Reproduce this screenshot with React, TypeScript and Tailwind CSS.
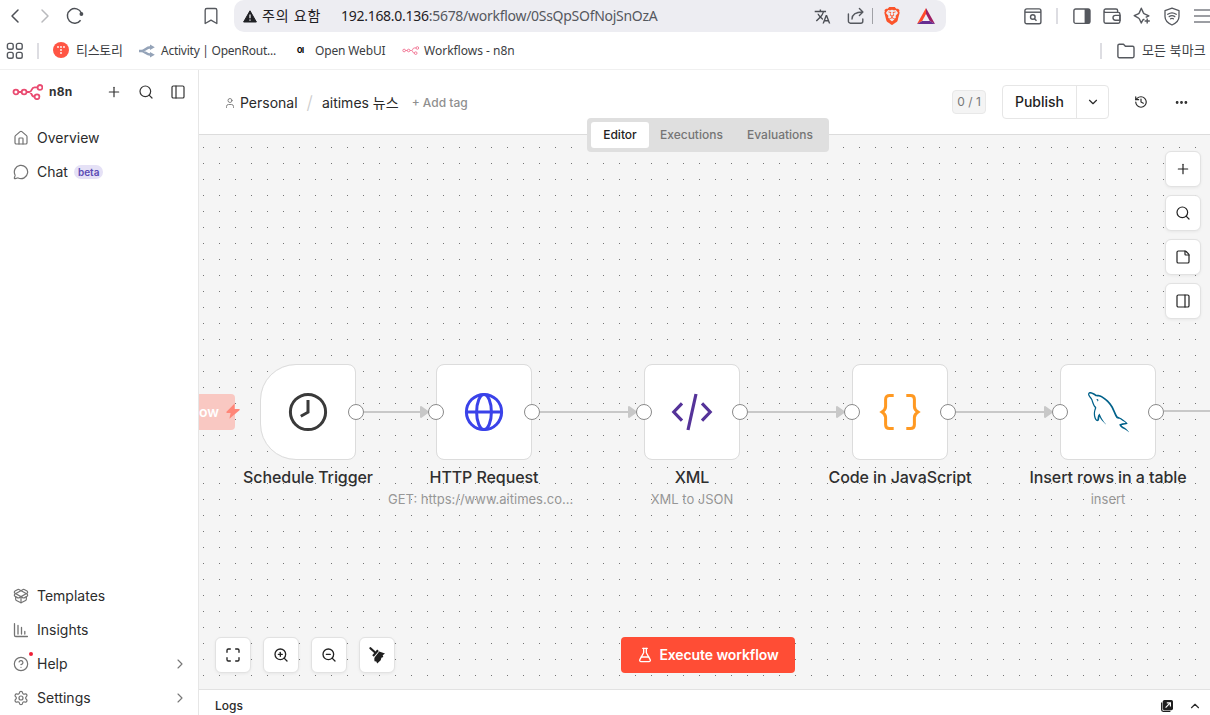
import React from 'react';
import {
  Bookmark,
  ChevronDown,
  ChevronLeft,
  ChevronRight,
  ChevronUp,
  CircleHelp,
  Ellipsis,
  FlaskConical,
  History,
  House,
  Maximize,
  MessageCircle,
  PackageOpen,
  PanelLeft,
  PanelRight,
  Plus,
  Search,
  Settings,
  StickyNote,
  User,
  ZoomIn,
  ZoomOut,
} from 'lucide-react';
import { GrMysql } from 'react-icons/gr';
import { MdTranslate } from 'react-icons/md';
import { SiBrave } from 'react-icons/si';

const N8nLogo = ({ className }: { className?: string }) => (
  <svg viewBox="0 0 31 16" className={className} fill="none" stroke="currentColor" strokeWidth="1.8">
    <circle cx="3.9" cy="8" r="2.4" />
    <circle cx="12.1" cy="8" r="2.4" />
    <circle cx="28" cy="3.4" r="2.4" />
    <circle cx="25" cy="12.8" r="2.4" />
    <path d="M6.300 8H9.700M14.500 8h2.800c3 0 1.600-4.600 5.200-4.600h3.100M17.300 8c3 0 1.400 4.800 5.300 4.800" />
  </svg>
);

const ReloadIcon = () => (
  <svg viewBox="0 0 18 18" className="size-[18px]" fill="none" stroke="#4d5056" strokeWidth="1.5">
    <path d="M14.6 13.2A7.3 7.3 0 1 1 15.4 6" />
    <circle cx="15.4" cy="7" r="1.9" fill="#4d5056" stroke="none" />
  </svg>
);

const AppsIcon = () => (
  <svg viewBox="0 0 18 18" className="size-[18px]" fill="none" stroke="#55585e" strokeWidth="1.4">
    <rect x="1.4" y="1.4" width="5.8" height="5.8" rx="1.8" />
    <rect x="10.4" y="1.4" width="5.8" height="5.8" rx="1.8" />
    <rect x="1.4" y="10.4" width="5.8" height="5.8" rx="1.8" />
    <rect x="10.4" y="10.4" width="5.8" height="5.8" rx="1.8" />
  </svg>
);

const WarningIcon = () => (
  <svg viewBox="0 0 14 13" className="w-[14px] h-[13px]">
    <path d="M7 .8 13.4 12H.6Z" fill="#1f2024" stroke="#1f2024" strokeLinejoin="round" />
    <path d="M7 4.6v3.6M7 9.4v1.3" stroke="#ededf2" strokeWidth="1.3" />
  </svg>
);

const ShareIcon = () => (
  <svg viewBox="0 0 18 18" className="size-[18px]" fill="none" stroke="#55585e" strokeWidth="1.4" strokeLinecap="round" strokeLinejoin="round">
    <path d="M1.4 7v7.2a2 2 0 0 0 2 2h10.4a2 2 0 0 0 2-2V12" />
    <path d="M5 12c.2-4.2 3-7 10.6-7M12.4 1.6 15.9 5l-3.5 3.4" />
  </svg>
);

const BatIcon = () => (
  <svg viewBox="0 0 18 16" className="w-[18px] h-4">
    <path d="M9 0 0 16l5.2-3L9 6Z" fill="#ff4a2a" />
    <path d="m9 0 9 16-5.2-3L9 6Z" fill="#9e1f63" />
    <path d="M0 16h18l-5.2-3H5.2Z" fill="#662d91" />
  </svg>
);

const FindIcon = () => (
  <svg viewBox="0 0 18 17" className="w-[18px] h-[17px]" fill="none" stroke="#55585e" strokeWidth="1.4">
    <rect x=".9" y=".9" width="16" height="14.8" rx="1.8" />
    <path d="M1 4.2h16" />
    <circle cx="8.8" cy="9" r="2.3" />
    <path d="m10.5 10.7 2 2" />
  </svg>
);

const BrowserSidebarIcon = () => (
  <svg viewBox="0 0 18 17" className="w-[18px] h-[17px]">
    <rect x=".9" y="1" width="16" height="14.4" rx="1.8" fill="none" stroke="#55585e" strokeWidth="1.4" />
    <path d="M11.6 1h4a1.6 1.6 0 0 1 1.6 1.6v11.2a1.6 1.6 0 0 1-1.6 1.6h-4Z" fill="#55585e" />
  </svg>
);

const WalletIcon = () => (
  <svg viewBox="0 0 18 17" className="w-[18px] h-[17px]" fill="none" stroke="#55585e" strokeWidth="1.4">
    <path d="M14.6 4.2V2.6a1.6 1.6 0 0 0-1.6-1.6H2.6A1.7 1.7 0 0 0 1 2.7c0 1 .8 1.7 1.7 1.7h12.6c.9 0 1.6.7 1.6 1.6v7.6c0 .9-.7 1.6-1.6 1.6H2.6A1.6 1.6 0 0 1 1 13.6V2.7" />
    <path d="M17 7.4h-4.6a2.4 2.4 0 0 0 0 4.8H17Z" />
  </svg>
);

const LeoIcon = () => (
  <svg viewBox="0 0 18 18" className="size-[18px]" fill="none" stroke="#55585e" strokeWidth="1.4" strokeLinejoin="round">
    <path d="M11.4 12.2 9.8 13 8.3 16 6.4 12c-.3-.6-.6-.9-1.2-1.2L1.2 8.7l4-1.9c.6-.3.9-.6 1.2-1.2l1.9-4.4 2 4.4c.3.6.6.9 1.2 1.2l4.4 2-3.2 1.5" />
    <path d="M14.2 11.4v5.2M11.6 14h5.2" />
  </svg>
);

const ShieldIcon = () => (
  <svg viewBox="0 0 18 19" className="w-[18px] h-[19px]" fill="none" stroke="#55585e" strokeWidth="1.3" strokeLinejoin="round" strokeLinecap="round">
    <path d="M9 1.2 16 3.6v6c0 4-3 6.7-7 8.4-4-1.7-7-4.4-7-8.4v-6Z" />
    <path d="M4.8 7.3c2.6-1.8 5.8-1.8 8.4 0M6.2 9.6c1.7-1.2 3.9-1.2 5.6 0" />
    <path d="M7.6 11.8c.9-.6 1.9-.6 2.8 0" />
  </svg>
);

const MenuIcon = () => (
  <svg viewBox="0 0 18 16" className="w-[18px] h-4" stroke="#7c7f85" strokeWidth="1.5">
    <path d="M1 2h17M1 8h17M1 14h17" />
  </svg>
);

const TistoryIcon = () => (
  <svg viewBox="0 0 16 16" className="size-4">
    <circle cx="8" cy="8" r="8" fill="#ff5544" />
    <g fill="#fff">
      <circle cx="5" cy="5" r=".9" />
      <circle cx="8" cy="5" r=".9" />
      <circle cx="11" cy="5" r=".9" />
      <circle cx="8" cy="8" r=".9" />
      <circle cx="8" cy="11" r=".9" />
    </g>
  </svg>
);

const OpenRouterIcon = () => (
  <svg viewBox="0 0 16 14" className="w-4 h-[14px]" fill="none" stroke="#94a3b8" strokeWidth="2.4">
    <path d="M0 7h2.5C6 7 6.5 3.3 12 3.3M2.5 7C6 7 6.5 10.7 12 10.7" />
    <path d="M11 .6 15.8 3.3 11 6ZM11 8l4.8 2.7L11 13.4Z" fill="#94a3b8" stroke="none" />
  </svg>
);

const FolderIcon = () => (
  <svg viewBox="0 0 18 16" className="w-[18px] h-4" fill="none" stroke="#55585e" strokeWidth="1.4" strokeLinejoin="round">
    <path d="M.9 2.6c0-.8.6-1.4 1.4-1.4h4.2l1.9 2.1h7.2c.8 0 1.4.6 1.4 1.4v8.6c0 .8-.6 1.4-1.4 1.4H2.3c-.8 0-1.4-.6-1.4-1.4Z" />
  </svg>
);

const InsightsIcon = () => (
  <svg viewBox="0 0 16 16" className="size-4" fill="none" stroke="currentColor" strokeWidth="1.3" strokeLinecap="round">
    <path d="M1.5 1.7v11.5c0 .8.5 1.3 1.3 1.3h11.6M5 3.5v8.5M8.5 5.5v6.5M11.8 9.5v2.5" />
  </svg>
);

const BroomIcon = () => (
  <svg viewBox="0 0 18 18" className="size-[18px]">
    <path d="M2.4 2.2 6.6 6" stroke="#1f1f1f" strokeWidth="2.2" strokeLinecap="round" />
    <path d="m4.2 9.2 5-5.6 1.6 1.4-4.9 5.7Z" fill="#1f1f1f" />
    <path d="m11.2 5.6 5.800 2-2.300 1.600.6 1.800-1.900.8-.7 2.400-3.500 3.200-.9-1.800-1.800-.4-.2-2.400.3-1.400Z" fill="#1f1f1f" />
  </svg>
);

const PopOutIcon = () => (
  <svg viewBox="0 0 14 14" className="size-[14px]" fill="none">
    <path d="M1.7 3.6v7.2c0 .9.6 1.5 1.5 1.5h7.2" stroke="#1f1f1f" strokeWidth="1.3" />
    <rect x="2.8" y="1" width="10.2" height="10.2" rx="1.6" fill="#1f1f1f" />
    <path d="M5.6 8.6 10 4.2M6.8 3.8h3.6v3.6" stroke="#fff" strokeWidth="1.2" />
  </svg>
);

const ClockIcon = () => (
  <svg viewBox="0 0 40 40" className="size-10" fill="none" stroke="#3a3a3a" strokeWidth="3">
    <circle cx="20" cy="20" r="17.6" />
    <path d="M20 8v12.2l-7.2 4" />
  </svg>
);

const GlobeIcon = () => (
  <svg viewBox="0 0 40 40" className="size-10" fill="none" stroke="#3a42e9" strokeWidth="3">
    <circle cx="20" cy="20" r="17.6" />
    <ellipse cx="20" cy="20" rx="7.4" ry="17.6" />
    <path d="M2 20h36" />
  </svg>
);

const XmlIcon = () => (
  <svg viewBox="0 0 44 40" className="w-11 h-10" fill="none" stroke="#553399" strokeWidth="3.2">
    <path d="M12 11.4 3.8 20l8.2 8.6M32 11.4l8.2 8.6-8.2 8.6M26 2l-8 36" />
  </svg>
);

const BracesIcon = () => (
  <svg viewBox="0 0 44 40" className="w-11 h-10" fill="none" stroke="#ff9922" strokeWidth="3">
    <path d="M15.7 3.5h-4.2c-2.2 0-3.900 1.300-3.900 3.700v7.300c0 2.300-.9 3.700-3.600 5.500 2.700 1.800 3.600 3.200 3.600 5.500v7.300c0 2.400 1.700 3.700 3.900 3.700h4.200M28.300 3.500h4.200c2.200 0 3.900 1.300 3.900 3.700v7.300c0 2.300.9 3.700 3.600 5.500-2.700 1.800-3.600 3.200-3.600 5.500v7.300c0 2.400-1.700 3.700-3.900 3.700h-4.200" />
  </svg>
);

interface WorkflowNode {
  name: string;
  subtitle?: string;
  x: number;
  trigger?: boolean;
  icon: React.ReactNode;
}

const NODE_TOP = 229;

const nodes: WorkflowNode[] = [
  { name: 'Schedule Trigger', x: 61, trigger: true, icon: <ClockIcon /> },
  { name: 'HTTP Request', subtitle: 'GET: https://www.aitimes.co...', x: 237, icon: <GlobeIcon /> },
  { name: 'XML', subtitle: 'XML to JSON', x: 445, icon: <XmlIcon /> },
  { name: 'Code in JavaScript', x: 653, icon: <BracesIcon /> },
  { name: 'Insert rows in a table', subtitle: 'insert', x: 861, icon: <GrMysql size={41} color="#00618a" /> },
];

const Handle = ({ side }: { side: 'left' | 'right' }) => (
  <span
    className={`absolute top-10 size-4 rounded-full border border-[#8a8a8a] bg-white ${
      side === 'left' ? '-left-2' : '-right-2'
    }`}
  />
);

const CanvasNode = ({ node }: { node: WorkflowNode }) => (
  <div className="absolute w-24" style={{ left: node.x, top: NODE_TOP }}>
    <div
      className={`relative flex size-24 items-center justify-center border border-[#dcdcdc] bg-white bg-clip-padding ${
        node.trigger ? 'rounded-l-[36px] rounded-r-lg' : 'rounded-lg'
      }`}
    >
      {node.icon}
    </div>
    {!node.trigger && <Handle side="left" />}
    <Handle side="right" />
    <div className="-mx-12 mt-[7px] text-center">
      <div className="text-base/5 font-medium tracking-[-0.08px] whitespace-nowrap text-[#2f2f2f]">{node.name}</div>
      {node.subtitle && (
        <div
          className={`mt-1 text-[13px]/4 whitespace-nowrap text-[#979797] ${
            node.subtitle.endsWith('...') ? 'text-left' : ''
          }`}
        >
          {node.subtitle}
        </div>
      )}
    </div>
  </div>
);

const Edges = () => (
  <svg className="absolute inset-0 size-full">
    <defs>
      <pattern id="dots" width="16" height="16" patternUnits="userSpaceOnUse">
        <rect x="4" y="12" width="1" height="1" fill="#747474" />
      </pattern>
    </defs>
    <rect width="100%" height="100%" fill="url(#dots)" />
    {nodes.slice(0, -1).map((node, i) => {
      const end = nodes[i + 1].x - 8;
      return (
        <g key={node.name} fill="#c8c8c8" stroke="#c8c8c8" strokeLinejoin="round">
          <path d={`M${node.x + 104} 277H${end - 6}`} strokeWidth="2" />
          <path d={`M${end - 7} 272l7 5-7 5Z`} strokeWidth="2" />
        </g>
      );
    })}
    <path d="M965 276h60" stroke="#c8c8c8" strokeWidth="2" />
  </svg>
);

const ControlButton = ({ children }: { children: React.ReactNode }) => (
  <button className="flex size-9 items-center justify-center rounded-md border border-[#e2e2e2] bg-white text-[#222] shadow-[0_1px_3px_rgba(0,0,0,0.06)]">
    {children}
  </button>
);

const Slot = ({ className, children }: { className: string; children: React.ReactNode }) => (
  <span className={`flex shrink-0 items-center justify-center ${className}`}>{children}</span>
);

const BrowserBar = () => (
  <div className="h-[70px] shrink-0 border-b border-[#f0f0f0] bg-white font-['Noto_Sans','Noto_Sans_CJK_KR',sans-serif] text-[#3b3d42]">
    <div className="flex h-8 items-center">
      <Slot className="w-[30px]"><ChevronLeft size={24} strokeWidth={1.5} color="#4d5056" /></Slot>
      <Slot className="w-[30px]"><ChevronRight size={24} strokeWidth={1.5} color="#b9babd" /></Slot>
      <Slot className="w-[30px]"><ReloadIcon /></Slot>
      <Slot className="ml-[106px] w-[30px]"><Bookmark size={20} strokeWidth={1.6} color="#55585e" /></Slot>
      <div className="ml-2 flex h-8 w-[712px] shrink-0 items-center rounded-[10px] bg-[#ededf2] pl-[9px] text-sm">
        <WarningIcon />
        <span className="ml-[5px] w-[79px] tracking-[0.8px] whitespace-nowrap text-[#1f2024]">주의 요함</span>
        <span className="tracking-[-0.28px] whitespace-nowrap text-[#1f2024]">
          192.168.0.136<span className="text-[#55585e]">:5678/workflow/0SsQpSOfNojSnOzA</span>
        </span>
        <div className="ml-auto flex items-center pr-[11px]">
          <MdTranslate size={17} color="#4b4e54" />
          <span className="ml-4"><ShareIcon /></span>
          <span className="ml-[7px] h-4 w-px bg-[#a0a1a6]" />
          <span className="ml-[10px]"><SiBrave size={18} color="#fb542b" /></span>
          <span className="ml-4"><BatIcon /></span>
        </div>
      </div>
      <Slot className="ml-[72px] w-[30px]"><FindIcon /></Slot>
      <span className="ml-2 h-4 w-0.5 shrink-0 bg-[#dddde2]" />
      <Slot className="ml-[9px] w-[30px]"><BrowserSidebarIcon /></Slot>
      <Slot className="w-[30px]"><WalletIcon /></Slot>
      <Slot className="w-[30px]"><LeoIcon /></Slot>
      <Slot className="w-[30px]"><ShieldIcon /></Slot>
      <Slot className="w-[30px]"><MenuIcon /></Slot>
    </div>
    <div className="flex h-[37px] items-center text-xs">
      <Slot className="w-[30px]"><AppsIcon /></Slot>
      <span className="ml-[7px] h-4 w-0.5 bg-[#dddde2]" />
      <div className="ml-[14px] flex w-[86px] items-center gap-[7px]">
        <TistoryIcon />
        <span className="text-[13px] tracking-[-0.3px] whitespace-nowrap">티스토리</span>
      </div>
      <div className="flex w-[154px] items-center gap-[6px]">
        <OpenRouterIcon />
        <span className="tracking-[-0.25px] whitespace-nowrap">Activity | OpenRout...</span>
      </div>
      <div className="flex w-[109px] items-center">
        <span className="w-[22px] pl-1 font-['Inter',sans-serif] text-[7px] font-extrabold tracking-tighter text-black">OI</span>
        <span className="tracking-[-0.15px] whitespace-nowrap">Open WebUI</span>
      </div>
      <N8nLogo className="h-[9px] w-[17px] text-[#f27a97]" />
      <span className="ml-[5px] whitespace-nowrap">Workflows - n8n</span>
      <span className="ml-auto h-4 w-0.5 bg-[#dddde2]" />
      <span className="mr-[7px] ml-[15px]"><FolderIcon /></span>
      <span className="w-[68px] text-[13px] tracking-[0.1px] whitespace-nowrap">모든 북마크</span>
    </div>
  </div>
);

interface NavItemProps {
  icon: React.ReactNode;
  label: string;
  badge?: string;
  dot?: boolean;
  expandable?: boolean;
}

const NavItem = ({ icon, label, badge, dot, expandable }: NavItemProps) => (
  <a className="relative flex h-[34px] items-center pr-[10px] pl-[13px] text-sm text-[#2c2c2c]">
    <span className="mr-2 text-[#737373]">{icon}</span>
    <span className="pb-px">{label}</span>
    {badge && (
      <span className="ml-1.5 rounded-full bg-[#e5e1f6] px-1 text-[10px]/[14px] font-semibold text-[#5b4bb5]">{badge}</span>
    )}
    {dot && <span className="absolute top-[5px] left-[29px] size-1 rounded-full bg-[#ee1f36]" />}
    {expandable && <ChevronRight size={16} strokeWidth={1.7} className="ml-auto text-[#777]" />}
  </a>
);

const Sidebar = () => (
  <aside className="flex w-[199px] shrink-0 flex-col border-r border-[#e6e6e6] bg-white">
    <div className="mb-[7px] flex h-11 items-center pl-3 text-[#333]">
      <N8nLogo className="h-4 w-[31px] text-[#ea4b71]" />
      <span className="ml-[6px] text-xs font-bold tracking-[0.2px]">n8n</span>
      <Plus size={16} strokeWidth={1.8} className="ml-auto" />
      <Search size={16} strokeWidth={1.8} className="ml-4" />
      <PanelLeft size={16} strokeWidth={1.8} className="mr-3 ml-4" />
    </div>
    <NavItem icon={<House size={16} strokeWidth={1.8} />} label="Overview" />
    <NavItem icon={<MessageCircle size={16} strokeWidth={1.8} />} label="Chat" badge="beta" />
    <div className="mt-auto">
      <NavItem icon={<PackageOpen size={16} strokeWidth={1.8} />} label="Templates" />
      <NavItem icon={<InsightsIcon />} label="Insights" />
      <NavItem icon={<CircleHelp size={16} strokeWidth={1.8} />} label="Help" dot expandable />
      <NavItem icon={<Settings size={16} strokeWidth={1.8} />} label="Settings" expandable />
    </div>
  </aside>
);

const Header = () => (
  <header className="relative z-10 flex h-[65px] shrink-0 items-center border-b border-[#dcdcdc] bg-white pl-[25px] text-sm text-[#2a2a2a]">
    <User size={12} strokeWidth={1.8} className="mt-px mr-1 text-[#777]" />
    <span className="pt-0.5">Personal</span>
    <span className="mx-[9px] pt-px text-lg font-light text-[#ccc]">/</span>
    <span className="pt-0.5 whitespace-nowrap">aitimes 뉴스</span>
    <span className="ml-[13px] pt-px text-xs font-medium text-[#8f8f8f]">+ Add tag</span>
    <span className="ml-auto flex h-6 w-[34px] items-center justify-center rounded border border-[#e8e8e8] bg-[#f4f4f4] text-xs text-[#777]">
      0 / 1
    </span>
    <div className="ml-4 flex h-[34px] w-[107px] rounded border border-[#e6e6e6]">
      <button className="flex w-[74px] items-center justify-center border-r border-[#e6e6e6] font-medium text-[#1f1f1f]">
        Publish
      </button>
      <button className="flex flex-1 items-center justify-center">
        <ChevronDown size={14} />
      </button>
    </div>
    <History size={14} className="ml-[25px]" />
    <Ellipsis size={15} strokeWidth={2.5} className="mr-[21px] ml-[26px]" />
    <div className="absolute top-12 left-[388px] flex h-[34px] w-[242px] items-center rounded bg-[#dfdfdf] p-1 text-xs font-medium text-[#757575]">
      <span className="flex h-[26px] w-[58px] items-center justify-center rounded-[3px] bg-white text-[#222]">Editor</span>
      <span className="ml-[11px]">Executions</span>
      <span className="ml-auto pr-3">Evaluations</span>
    </div>
  </header>
);

const Canvas = () => (
  <section className="relative flex-1 overflow-hidden bg-[#f5f5f5]">
    <Edges />
    <div className="absolute top-[259px] left-0 flex h-9 w-9 items-center rounded-r bg-[#f9c8c2] pb-px text-sm font-semibold text-white">
      ow
    </div>
    <svg viewBox="0 0 14 16" className="absolute top-[268px] left-[27px] h-4 w-[14px]">
      <path d="M8.6.4.5 8.800c-.4.500-.1 1.100.5 1.100h3.600L3.400 15.800 13.500 7.300c.5-.5.200-1.200-.5-1.200H8.600Z" fill="#ff8678" />
    </svg>
    {nodes.map((node) => (
      <CanvasNode key={node.name} node={node} />
    ))}
    <div className="absolute top-4 right-[9px] flex flex-col gap-2">
      <ControlButton><Plus size={16} strokeWidth={1.8} /></ControlButton>
      <ControlButton><Search size={16} strokeWidth={1.8} /></ControlButton>
      <ControlButton><StickyNote size={16} strokeWidth={1.8} /></ControlButton>
      <ControlButton><PanelRight size={16} strokeWidth={1.8} /></ControlButton>
    </div>
    <div className="absolute bottom-4 left-4 flex gap-3">
      <ControlButton><Maximize size={16} /></ControlButton>
      <ControlButton><ZoomIn size={16} /></ControlButton>
      <ControlButton><ZoomOut size={16} /></ControlButton>
      <ControlButton><BroomIcon /></ControlButton>
    </div>
    <button className="absolute bottom-4 left-[422px] flex h-9 w-[174px] items-center justify-center gap-1.5 rounded bg-[#ff4d35] text-sm font-semibold whitespace-nowrap text-white">
      <FlaskConical size={16} />
      <span className="pb-px tracking-[-0.1px]">Execute workflow</span>
    </button>
  </section>
);

const App: React.FC = () => {
  return (
    <div className="flex h-screen flex-col overflow-hidden bg-white font-['Inter','Noto_Sans_CJK_KR',sans-serif]">
      <BrowserBar />
      <div className="flex min-h-0 flex-1">
        <Sidebar />
        <main className="flex min-w-0 flex-1 flex-col">
          <Header />
          <Canvas />
          <footer className="flex h-[26px] shrink-0 items-center border-t border-[#e2e2e2] bg-white pt-[7px] pr-2 pl-4 text-xs font-medium text-[#2a2a2a]">
            Logs
            <span className="mr-[14px] ml-auto"><PopOutIcon /></span>
            <ChevronUp size={14} />
          </footer>
        </main>
      </div>
    </div>
  );
};

export default App;
